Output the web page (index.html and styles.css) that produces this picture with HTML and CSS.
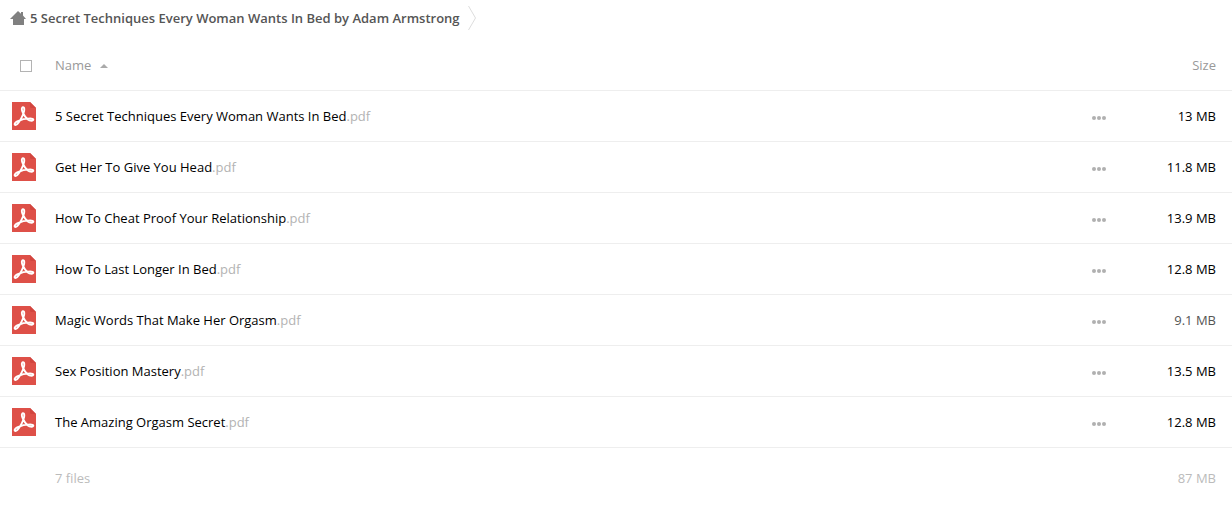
FILE: index.html
```html
<!DOCTYPE html>
<html lang="en">
<head>
<meta charset="utf-8">
<title>Files</title>
<link rel="stylesheet" href="styles.css">
</head>
<body>
<svg class="defs" aria-hidden="true">
  <symbol id="pdf" viewBox="0 0 24 28">
    <path d="M0 0h18l6 6v22H0z" fill="#de5048"/>
    <path d="M18 0l6 6h-4.500Q18 6 18 4.500z" fill="#d2453e"/>
    <path d="M11 11C9.600 8.500 9.300 5.300 11 5.300s1.600 3 .4 6.200C10.200 15 6 23 3.600 23c-1.800 0-1-2.300 1.600-3.600C8.600 17.700 14 16.400 18.200 16.400c4 0 3.800 2.300 1.400 2.300-3.600 0-6.800-4.200-8.600-7.700z" fill="none" stroke="#fff" stroke-width="1.900" stroke-linejoin="round"/>
  </symbol>
</svg>
<nav class="crumbs">
  <a class="crumb" href="#">
    <svg class="home" viewBox="0 0 16 14" aria-hidden="true"><path d="M8 0l3 2.800V1h2v3.600L16 8h-2v6H3V8H0z" fill="#808080"/></svg>
    <span>5 Secret Techniques Every Woman Wants In Bed by Adam Armstrong</span>
  </a>
  <svg class="sep" viewBox="0 0 8 24" aria-hidden="true"><path d="M.5 0l7 12-7 12" fill="none" stroke="#ddd"/></svg>
</nav>
<table class="files">
  <thead>
    <tr>
      <th class="icon"><input class="check" type="checkbox" aria-label="Select all"></th>
      <th class="name"><button class="sort" type="button">Name<span class="arrow"></span></button></th>
      <th class="actions"></th>
      <th class="size">Size</th>
    </tr>
  </thead>
  <tbody id="rows">
  </tbody>
  <tfoot>
    <tr><td></td><td class="name">7 files</td><td></td><td class="size">87 MB</td></tr>
  </tfoot>
</table>
<script src="app.js"></script>
</body>
</html>
```
FILE: styles.css
```css
body {
  margin: 0;
  background: #fff;
  color: #000;
  font: 13px/18px "Open Sans", sans-serif;
}
.defs { position: absolute; width: 0; height: 0; }
.crumbs { display: flex; align-items: center; height: 36px; padding-left: 10px; gap: 8px; }
.crumb { display: flex; align-items: center; gap: 4px; color: #555; font-weight: 600; text-decoration: none; }
.home { width: 16px; height: 14px; }
.sep { width: 8px; height: 24px; }
.files { width: 100%; border-collapse: collapse; margin-top: 4px; table-layout: fixed; }
th, td { height: 50px; padding: 0; font-weight: 400; text-align: left; border-bottom: 1px solid #eee; }
th { color: #999; }
.icon { width: 55px; }
.actions { width: 42px; }
.size { width: 82px; padding-right: 16px; text-align: right; }
.check { display: block; appearance: none; width: 12px; height: 12px; margin: 2px 0 0 20px; border: 1px solid #b3b3b3; }
.sort { display: flex; align-items: center; gap: 9px; padding: 0; border: 0; background: none; color: inherit; font: inherit; }
.arrow { margin-top: 2px; border: 4px solid transparent; border-top: 0; border-bottom-color: #aaa; }
.pdf { display: block; width: 24px; height: 28px; margin-left: 12px; }
.ext { color: #b3b3b3; }
.more { display: flex; padding: 4px 0 0; border: 0; background: none; }
.dots { width: 14px; height: 4px; }
.small { color: #555; }
tfoot td { height: 60px; border: 0; color: #bbb; }
```
FILE: app.js
```js
const files = [
  ["5 Secret Techniques Every Woman Wants In Bed", "13 MB"],
  ["Get Her To Give You Head", "11.8 MB"],
  ["How To Cheat Proof Your Relationship", "13.9 MB"],
  ["How To Last Longer In Bed", "12.8 MB"],
  ["Magic Words That Make Her Orgasm", "9.1 MB"],
  ["Sex Position Mastery", "13.5 MB"],
  ["The Amazing Orgasm Secret", "12.8 MB"]
];
document.getElementById("rows").innerHTML = files.map(([name, size]) => `
  <tr>
    <td><svg class="pdf" aria-hidden="true"><use href="#pdf"/></svg></td>
    <td class="name">${name}<span class="ext">.pdf</span></td>
    <td><button class="more" type="button" aria-label="Actions for ${name}"><svg class="dots" viewBox="0 0 14 4"><g fill="#b0b0b0"><circle cx="2" cy="2" r="2"/><circle cx="7" cy="2" r="2"/><circle cx="12" cy="2" r="2"/></g></svg></button></td>
    <td class="size${parseFloat(size) < 10 ? " small" : ""}">${size}</td>
  </tr>`).join("");
```
